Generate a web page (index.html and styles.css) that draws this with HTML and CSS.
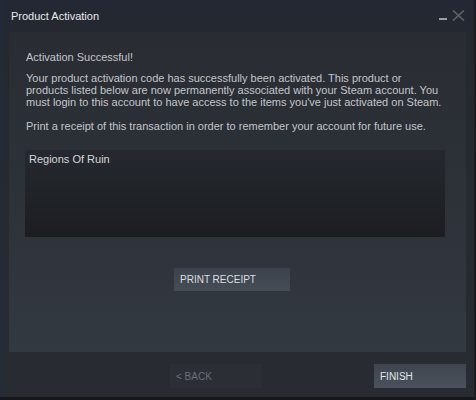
FILE: index.html
```html
<!DOCTYPE html>
<html>
<head>
<meta charset="utf-8">
<link rel="stylesheet" href="styles.css">
</head>
<body>
<div class="window">
  <div class="titlebar">
    <span class="title">Product Activation</span>
    <div class="controls">
      <span class="min"></span>
      <svg class="close" width="13" height="11" viewBox="0 0 13 11"><path d="M1 0.5 L12 10.5 M12 0.5 L1 10.5" stroke="#5e6269" stroke-width="1.6" fill="none"/></svg>
    </div>
  </div>
  <div class="panel">
    <p class="heading">Activation Successful!</p>
    <p class="para">Your product activation code has successfully been activated. This product or products listed below are now permanently associated with your Steam account. You must login to this account to have access to the items you've just activated on Steam.</p>
    <p class="para2">Print a receipt of this transaction in order to remember your account for future use.</p>
    <div class="listbox">Regions Of Ruin</div>
    <div class="center-row">
      <button class="btn btn-print">PRINT RECEIPT</button>
    </div>
  </div>
  <div class="footer">
    <button class="btn btn-back">&lt; BACK</button>
    <button class="btn btn-finish">FINISH</button>
  </div>
</div>
</body>
</html>
```
FILE: styles.css
```css
html, body {
  margin: 0;
  padding: 0;
  background: #17191c;
}
.window {
  width: 476px;
  height: 400px;
  box-sizing: border-box;
  border-right: 2px solid #1b1d21;
  border-bottom: 3px solid #16181b;
  background:
    linear-gradient(to right, rgba(30,45,70,0.55) 0, rgba(30,45,70,0) 4px),
    linear-gradient(to bottom, #232834 0, #25282f 40px, #282b31 100%);
  display: flex;
  flex-direction: column;
  font-family: "Liberation Sans", Arial, sans-serif;
}
.titlebar {
  height: 32px;
  flex: none;
  display: flex;
  align-items: flex-start;
  justify-content: space-between;
  padding: 9px 9px 0 11px;
  box-sizing: border-box;
}
.title {
  color: #e8eaec;
  font-size: 11px;
  line-height: 14px;
}
.controls {
  display: flex;
  align-items: flex-start;
  gap: 5px;
  padding-top: 1px;
}
.min {
  width: 8px;
  height: 2px;
  background: #9a9ea4;
  margin-top: 8px;
}
.panel {
  height: 320px;
  flex: none;
  margin: 0 8px 0 9px;
  box-sizing: border-box;
  padding: 19px 0 0 17px;
  background: linear-gradient(to bottom, #292c33 0%, #2c3037 40%, #333941 100%);
  color: #c3c6ca;
  font-size: 11px;
  line-height: 12px;
}
.panel p {
  margin: 0;
}
.para {
  margin-top: 9px !important;
  width: 418px;
}
.para2 {
  margin-top: 12px !important;
}
.listbox {
  margin: 18px 0 0 -1px;
  width: 420px;
  height: 87px;
  box-sizing: border-box;
  padding: 3px 4px;
  background: linear-gradient(to bottom, #25282e 0%, #202328 50%, #1b1d21 100%);
  color: #d6d8da;
  font-size: 11px;
  line-height: 13px;
}
.center-row {
  display: flex;
  padding-left: 148px;
  margin-top: 31px;
}
.btn {
  font-family: "Liberation Sans", Arial, sans-serif;
  font-size: 10px;
  border: none;
  text-align: left;
  padding: 0 0 0 6px;
  box-sizing: border-box;
  cursor: pointer;
}
.btn-print {
  width: 116px;
  height: 23px;
  background: linear-gradient(to bottom, #3c424b 0%, #474d57 100%);
  color: #dcdee0;
}
.footer {
  flex: 1;
  display: flex;
  align-items: flex-start;
  justify-content: flex-end;
  padding: 12px 8px 0 0;
  gap: 112px;
}
.btn-back {
  width: 92px;
  height: 24px;
  background: #2b2e35;
  color: #6b7079;
}
.btn-finish {
  width: 92px;
  height: 24px;
  background: linear-gradient(to bottom, #3f4550 0%, #4b515b 100%);
  color: #e4e6e8;
}
```
